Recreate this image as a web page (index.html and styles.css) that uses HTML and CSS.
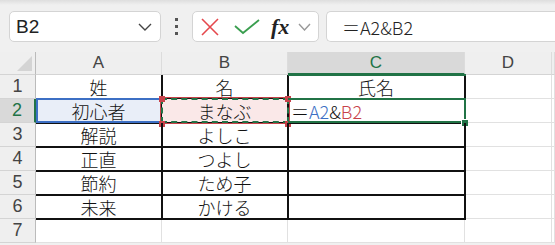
FILE: index.html
```html
<!DOCTYPE html>
<html lang="ja">

<head>
    <meta charset="UTF-8">
    <meta name="viewport" content="width=device-width, initial-scale=1.0">
    <title>姓と名をつなぐ</title>
    <link rel="stylesheet" href="styles.css">
</head>

<body>
    <div class="toolbar">
        <div class="namebox">
            <span>B2</span>
            <svg class="chev" width="14" height="8" viewBox="0 0 14 8">
                <path d="M1 1 L7 7 L13 1" fill="none" stroke="#444" stroke-width="1.4" />
            </svg>
        </div>
        <div class="dots"><i></i><i></i><i></i></div>
        <div class="fbuttons">
            <svg width="20" height="20" viewBox="0 0 20 20">
                <path d="M2 2 L18 18 M18 2 L2 18" stroke="#e5484d" stroke-width="1.6" fill="none" />
            </svg>
            <svg width="26" height="16" viewBox="0 0 26 16">
                <path d="M1 7 L9 14 L25 1" stroke="#3a9e4f" stroke-width="1.8" fill="none" />
            </svg>
            <span class="fx">fx</span>
            <svg width="13" height="8" viewBox="0 0 13 8">
                <path d="M1 1 L6.5 7 L12 1" fill="none" stroke="#999" stroke-width="1.4" />
            </svg>
        </div>
        <div class="formula">＝A2&amp;B2</div>
    </div>

    <div class="sheet">
        <div class="corner"><span class="tri"></span></div>
        <div class="colhead">A</div>
        <div class="colhead">B</div>
        <div class="colhead sel">C</div>
        <div class="colhead">D</div>
        <div class="colhead"></div>

        <div class="rowhead">1</div>
        <div class="cell t">姓</div>
        <div class="cell t">名</div>
        <div class="cell t top-green">氏名</div>
        <div class="cell"></div>
        <div class="cell"></div>

        <div class="rowhead sel">2</div>
        <div class="cell t ref-a">初心者</div>
        <div class="cell t ref-b">まなぶ</div>
        <div class="cell t active">＝<span class="blue">A2</span>&amp;<span class="red">B2</span></div>
        <div class="cell"></div>
        <div class="cell"></div>

        <div class="rowhead">3</div>
        <div class="cell t">解説</div>
        <div class="cell t">よしこ</div>
        <div class="cell t"></div>
        <div class="cell"></div>
        <div class="cell"></div>

        <div class="rowhead">4</div>
        <div class="cell t">正直</div>
        <div class="cell t">つよし</div>
        <div class="cell t"></div>
        <div class="cell"></div>
        <div class="cell"></div>

        <div class="rowhead">5</div>
        <div class="cell t">節約</div>
        <div class="cell t">ため子</div>
        <div class="cell t"></div>
        <div class="cell"></div>
        <div class="cell"></div>

        <div class="rowhead">6</div>
        <div class="cell t">未来</div>
        <div class="cell t">かける</div>
        <div class="cell t"></div>
        <div class="cell"></div>
        <div class="cell"></div>

        <div class="rowhead">7</div>
        <div class="cell"></div>
        <div class="cell"></div>
        <div class="cell"></div>
        <div class="cell"></div>
        <div class="cell"></div>
    </div>
</body>

</html>
```

FILE: styles.css
```css
body {
    margin: 0;
    background-color: #f0f0f0;
    font-family: "Noto Sans CJK JP", "Liberation Sans", sans-serif;
    overflow: hidden;
}

/* top bar */

.toolbar {
    height: 52px;
    box-sizing: border-box;
    padding: 11px 0 0 9px;
    display: flex;
    align-items: flex-start;
    background: linear-gradient(#dedede, #f0f0f0 5px);
}

.namebox,
.fbuttons,
.formula {
    height: 31px;
    box-sizing: border-box;
    background-color: white;
    border: 1px solid #d4d4d4;
    border-radius: 5px;
    display: flex;
    align-items: center;
}

.namebox {
    width: 152px;
    padding: 0 8px 0 6px;
    justify-content: space-between;
    font-family: "Liberation Sans", sans-serif;
    font-size: 19px;
    font-weight: 300;
    color: #222;
}

.dots {
    width: 31px;
    height: 31px;
    display: flex;
    flex-direction: column;
    align-items: center;
    justify-content: center;
    gap: 4px;
}

.dots i {
    width: 3px;
    height: 3px;
    background-color: #555;
}

.fbuttons {
    width: 127px;
    padding: 0 0 0 7px;
    gap: 14px;
}

.fbuttons .fx {
    font-family: "Liberation Serif", serif;
    font-style: italic;
    font-weight: bold;
    font-size: 22px;
    color: #222;
    margin: 0 -5px 0 -3px;
}

.formula {
    flex: 1;
    margin-left: 7px;
    border-right: none;
    border-radius: 5px 0 0 5px;
    padding-left: 15px;
    font-size: 18px;
    font-weight: 300;
    color: #222;
}

/* grid */

.sheet {
    display: grid;
    grid-template-columns: 36px 126px 126px 177px 87px 1fr;
    grid-template-rows: 23px repeat(7, 24px);
    background-color: white;
}

.corner,
.colhead,
.rowhead {
    background-color: #efefef;
    color: #444;
    font-family: "Liberation Sans", sans-serif;
    font-weight: 300;
    display: flex;
    align-items: center;
    justify-content: center;
    box-sizing: border-box;
}

.corner {
    border-right: 1px solid #bbb;
    border-bottom: 1px solid #d4d4d4;
    position: relative;
}

.tri {
    position: absolute;
    right: 3px;
    bottom: 3px;
    width: 0;
    height: 0;
    border-left: 15px solid transparent;
    border-bottom: 15px solid #d4d4d4;
}

.colhead {
    font-size: 17px;
    border-right: 1px solid #dcdcdc;
    border-bottom: 1px solid #d4d4d4;
}

.colhead.sel {
    background-color: #d9d9d9;
    color: #217346;
    border-bottom: 2px solid #217346;
}

.rowhead {
    font-size: 18px;
    border-right: 1px solid #bbb;
    border-bottom: 1px solid #d4d4d4;
}

.rowhead.sel {
    background-color: #d9d9d9;
    color: #217346;
    border-right: 2px solid #217346;
}

.cell {
    box-sizing: border-box;
    border-right: 1px solid #e1e1e1;
    border-bottom: 1px solid #e1e1e1;
    font-size: 18px;
    font-weight: 300;
    color: #111;
    display: flex;
    align-items: center;
    justify-content: center;
    line-height: 1;
    position: relative;
}

.cell.t {
    border-right: 2px solid #111;
    border-bottom: 2px solid #111;
    margin-right: -1px;
    margin-bottom: -1px;
    z-index: 1;
}

.cell.top-green::before {
    content: "";
    position: absolute;
    left: 0;
    right: -2px;
    top: -1px;
    border-top: 2px solid #217346;
}

/* formula references */

.ref-a {
    background-color: #e9eef8;
}

.ref-a::after {
    content: "";
    position: absolute;
    inset: -1px -2px -1px 0;
    border: 2px solid #3c6fc4;
    border-right: none;
}

.ref-b {
    background-color: #fae8e8;
    z-index: 3;
}

.ref-b::after {
    content: "";
    position: absolute;
    inset: -1px -2px -1px -1px;
    border: 2px dashed #217346;
    outline: 1px solid #c8424a;
}

.ref-b::before {
    content: "";
    position: absolute;
    left: -3px;
    top: -3px;
    width: 6px;
    height: 6px;
    background-color: #c8424a;
    z-index: 2;
    box-shadow: 126px 0 0 #c8424a, 0 25px 0 #c8424a, 126px 25px 0 #c8424a;
}

.active {
    justify-content: flex-start;
    padding-left: 3px;
}

.active::after {
    content: "";
    position: absolute;
    inset: -1px -2px -1px 0;
    border: 2px solid #217346;
    border-left: none;
}

.active::before {
    content: "";
    position: absolute;
    right: -4px;
    bottom: -4px;
    width: 6px;
    height: 6px;
    background-color: #217346;
    border-left: 1px solid white;
    border-top: 1px solid white;
    z-index: 2;
}

.blue {
    color: #3c6fc4;
}

.red {
    color: #c8424a;
}
```
